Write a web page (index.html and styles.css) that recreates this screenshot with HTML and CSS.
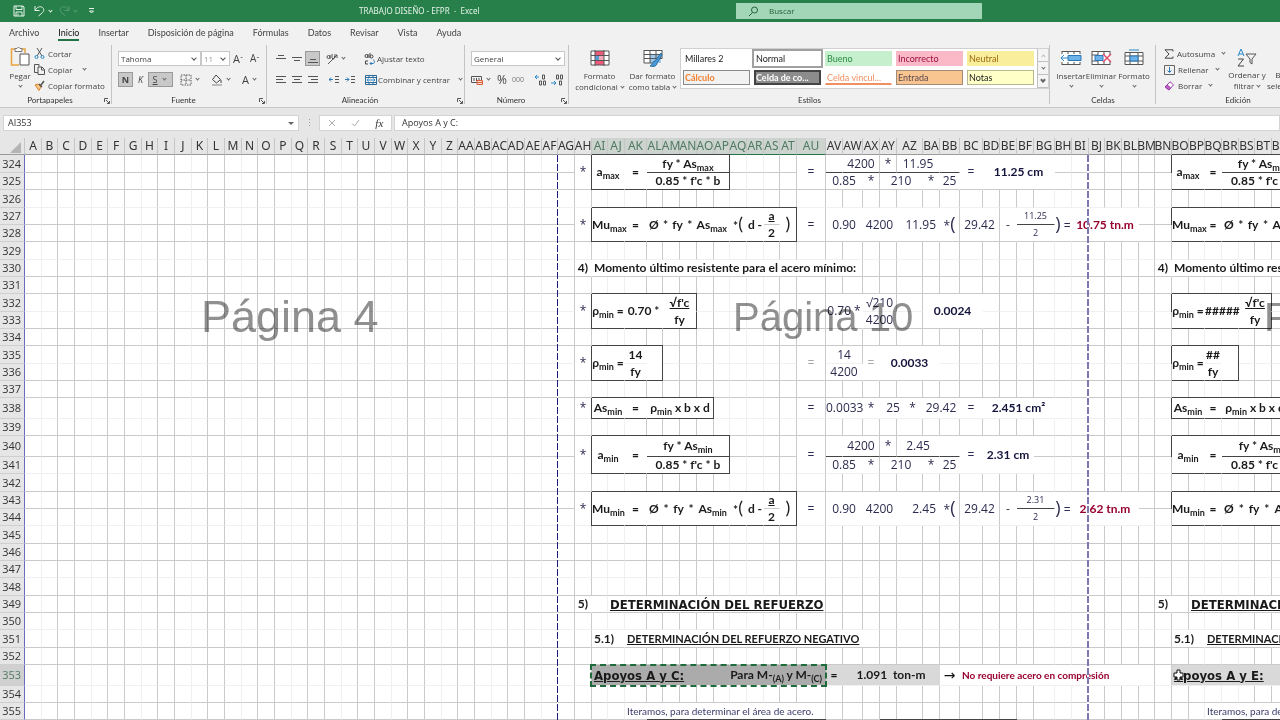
FILE: index.html
```html
<!DOCTYPE html>
<html lang="es">
<head>
<meta charset="utf-8">
<title>TRABAJO DISEÑO - EFPR - Excel</title>
<link rel="stylesheet" href="styles.css">
</head>
<body>
<div class="app">
  <header class="titlebar">
    <div class="quick">
      <button aria-label="Guardar"><svg width="12" height="12" viewBox="0 0 12 12"><path d="M1 1h9l1 1v9H1zM3 1v3.500h6V1M3 11V7h6v4M5 8.500v2"/></svg></button>
      <button aria-label="Deshacer"><svg width="11" height="12" viewBox="0 0 11 12"><path d="M1 1v4.500h4.500M1 5.500C3 2 6 .8 8.500 2.500c2 1.500 1.500 4-.5 5.500L4.500 11"/></svg></button>
      <span class="caret"></span>
      <button class="dim" aria-label="Rehacer"><svg width="11" height="12" viewBox="0 0 11 12"><path d="M10 1v4.500H5.500M10 5.500C8 2 5 .8 2.500 2.500c-2 1.500-1.500 4 .5 5.500L6.500 11"/></svg></button>
      <span class="caret dim"></span>
      <button class="more" aria-label="Personalizar"><svg width="7" height="6" viewBox="0 0 7 6"><path d="M1 .5h5M1.500 3l2 2 2-2z"/></svg></button>
    </div>
    <div class="doc-title">TRABAJO DISEÑO - EFPR&nbsp; -&nbsp; Excel</div>
    <label class="search"><svg width="11" height="11" viewBox="0 0 11 11"><circle cx="6.500" cy="4" r="3"/><path d="M4.500 6.500L1 10"/></svg><input type="text" placeholder="Buscar" aria-label="Buscar"></label>
  </header>

  <nav class="tabs">
    <a href="#">Archivo</a><a href="#" class="active">Inicio</a><a href="#">Insertar</a><a href="#">Disposición de página</a><a href="#">Fórmulas</a><a href="#">Datos</a><a href="#">Revisar</a><a href="#">Vista</a><a href="#">Ayuda</a>
  </nav>

  <div class="ribbon">
    <section class="group g-clip">
      <div class="body">
        <button class="big paste"><svg width="20" height="21" viewBox="0 0 20 21"><path d="M5 3H1.500v16H9M12 3h3v4" stroke="#e8a33d" stroke-width="1.500"/><path d="M5 2.500h2L8.500 1 10 2.500h2v3H5z" fill="#fff" stroke="#777"/><path d="M10 8h9v11h-9z" fill="#fff" stroke="#555"/></svg>Pegar<span class="caret"></span></button>
        <div class="stack">
          <button><svg width="11" height="11" viewBox="0 0 11 11"><path d="M3 0l5 8M8 0L3 8" stroke="#555"/><circle cx="2.500" cy="9" r="1.500" stroke="#2b88c8"/><circle cx="8.500" cy="9" r="1.500" stroke="#2b88c8"/></svg>Cortar</button>
          <button><svg width="11" height="11" viewBox="0 0 11 11"><path d="M4 8.500H.5v-8H5v2M4 3h4l2.500 2.500v5H4zM7.500 3v3h3" stroke="#555"/></svg>Copiar<span class="caret far"></span></button>
          <button><svg width="11" height="11" viewBox="0 0 11 11"><path d="M1 5l3-1 3 3-2 3.500z" fill="#f4c88a" stroke="#d9822b"/><path d="M5 4l3 3M7 5l3-4" stroke="#555" stroke-width="1.500"/></svg>Copiar formato</button>
        </div>
      </div>
      <footer>Portapapeles</footer><svg class="launch" width="6" height="6" viewBox="0 0 6 6"><path d="M.5 4V.5H4M2 2l3 3M5.500 3v2.500H3"/></svg>
    </section>

    <section class="group g-font">
      <div class="body rows">
        <div class="row">
          <span class="drop w-font"><select aria-label="Fuente"><option>Tahoma</option></select></span>
          <span class="drop w-size"><select aria-label="Tamaño"><option>11</option></select></span>
          <button class="glyph">A<sup>ˆ</sup></button><button class="glyph small">A<sup>ˇ</sup></button>
        </div>
        <div class="row">
          <button class="tog on"><b>N</b></button><button class="tog"><i>K</i></button><button class="tog on wide"><u>S</u><span class="caret"></span></button>
          <button class="gap"><svg width="12" height="12" viewBox="0 0 12 12"><path d="M1 1h10v10H1zM6 1v10M1 6h10" stroke="#555" stroke-dasharray="1.500 1"/></svg><span class="caret"></span></button>
          <button class="gap"><svg width="12" height="12" viewBox="0 0 12 12"><path d="M5 1l4.500 4.500L5.500 9 1.500 5.500zM10 6v3" stroke="#444"/><path d="M1 11h10" stroke="#bbb" stroke-width="2"/></svg><span class="caret"></span></button>
          <button class="glyph">A<span class="caret"></span></button>
        </div>
      </div>
      <footer>Fuente</footer><svg class="launch" width="6" height="6" viewBox="0 0 6 6"><path d="M.5 4V.5H4M2 2l3 3M5.500 3v2.500H3"/></svg>
    </section>

    <section class="group g-align">
      <div class="body rows">
        <div class="row">
          <button class="sq"><svg width="10" height="10" viewBox="0 0 10 10"><path d="M2 1.500h6M0 4.500h10"/></svg></button>
          <button class="sq"><svg width="10" height="10" viewBox="0 0 10 10"><path d="M0 3.500h10M2 6.500h6"/></svg></button>
          <button class="sq on"><svg width="10" height="10" viewBox="0 0 10 10"><path d="M2 5.500h6M0 8.500h10"/></svg></button>
          <button class="orient"><svg width="12" height="12" viewBox="0 0 12 12"><path d="M2 11L11 2M11 5V2H8M1 4a1.500 1.500 0 103 0 1.500 1.500 0 10-3 0M4 2v4M6 1v4a1.500 1.500 0 102-2"/></svg><span class="caret"></span></button>
          <button class="wrap"><svg width="12" height="12" viewBox="0 0 12 12"><path d="M1 3a1.500 1.500 0 103 0 1.500 1.500 0 10-3 0M4 1v4M6 0v5M6 3.500a1.500 1.500 0 103 0 1.500 1.500 0 10-3 0M4 8H1.500v3H4" stroke="#444"/><path d="M6 10.500h3c2 0 2-3.500 0-3.500M7.500 9L6 10.500 7.500 12" stroke="#2b78b8"/></svg>Ajustar texto</button>
        </div>
        <div class="row">
          <button class="sq"><svg width="10" height="8" viewBox="0 0 10 8"><path d="M0 .5h10M0 3.500h7M0 6.500h10"/></svg></button>
          <button class="sq"><svg width="10" height="8" viewBox="0 0 10 8"><path d="M0 .5h10M2 3.500h6M0 6.500h10"/></svg></button>
          <button class="sq"><svg width="10" height="8" viewBox="0 0 10 8"><path d="M0 .5h10M3 3.500h7M0 6.500h10"/></svg></button>
          <button class="sq ind"><svg width="10" height="8" viewBox="0 0 10 8"><path d="M6 .5h4M6 3.500h4M6 6.500h4"/><path d="M4 3.500H0M2 1.500l-2 2 2 2" stroke="#2b78b8"/></svg></button>
          <button class="sq"><svg width="10" height="8" viewBox="0 0 10 8"><path d="M6 .5h4M6 3.500h4M6 6.500h4"/><path d="M0 3.500h4M2 1.500l2 2-2 2" stroke="#2b78b8"/></svg></button>
          <button class="wrap"><svg width="12" height="10" viewBox="0 0 12 10"><path d="M.5.500h11v9H.5zM.5 2.500h11M.5 7.500h11M4 .5v2M8 .5v2M4 7.500v2M8 7.500v2" stroke="#2b6a98"/><path d="M2 5h8M3.500 3.500L2 5l1.500 1.500M8.500 3.500L10 5 8.500 6.500" stroke="#2b88c8"/></svg>Combinar y centrar<span class="caret far"></span></button>
        </div>
      </div>
      <footer>Alineación</footer><svg class="launch" width="6" height="6" viewBox="0 0 6 6"><path d="M.5 4V.5H4M2 2l3 3M5.500 3v2.500H3"/></svg>
    </section>

    <section class="group g-num">
      <div class="body rows">
        <div class="row"><span class="drop w-num"><select aria-label="Formato de número"><option>General</option></select></span></div>
        <div class="row num">
          <button><svg width="12" height="10" viewBox="0 0 12 10"><path d="M.5 1.500h10v6H.5zM3 3v3M8 3v2M5.500 3v3" stroke="#555"/><path d="M6 5.500h5.500v4H6zM6 7.500h5.500" stroke="#d9603b" fill="#fbe0d6"/></svg><span class="caret"></span></button>
          <button class="pct">%</button><button class="zeros">000</button>
          <button class="dec" aria-label="Aumentar decimales"><svg width="12" height="12" viewBox="0 0 12 12"><path d="M5 3H1M3 1L1 3l2 2" stroke="#2b88c8"/><path d="M8.500 1h2v4h-2zM5.500 7h2v4h-2zM9.500 7h2v4h-2z"/></svg></button><button class="dec" aria-label="Disminuir decimales"><svg width="12" height="12" viewBox="0 0 12 12"><path d="M0 9h5M3 7l2 2-2 2" stroke="#2b88c8"/><path d="M5.500 1h2v4h-2zM9.500 1h2v4h-2zM8.500 7h2v4h-2z"/></svg></button>
        </div>
      </div>
      <footer>Número</footer><svg class="launch" width="6" height="6" viewBox="0 0 6 6"><path d="M.5 4V.5H4M2 2l3 3M5.500 3v2.500H3"/></svg>
    </section>

    <section class="group g-style">
      <div class="body">
        <button class="big"><svg width="20" height="18" viewBox="0 0 20 18"><path d="M1 2h18v14H1z" fill="#fff" stroke="none"/><path d="M5 2h9v4H5zM8 12h6v4H5v-4z" fill="#ef5a7a" stroke="none"/><path d="M5 6h4v6H5z" fill="#5b9bd5" stroke="none"/><path d="M9 6h5v6H9z" fill="#f7a8b8" stroke="none"/><path d="M1 2h18M1 6.500h18M1 11.500h18M1 16h18M5 1v16M14 1v16M1 2v14M19 2v14" stroke="#555"/></svg>Formato<span>condicional <span class="caret"></span></span></button>
        <button class="big"><svg width="20" height="18" viewBox="0 0 20 18"><path d="M1 1h18v13H1z" fill="#fff" stroke="none"/><path d="M7 5h11v9H7z" fill="#9cc8ec" stroke="none"/><path d="M1 1.500h18M1 5.500h18M1 9.500h18M1 14h8M1 1v13M7 1v13M13 1v8M19 1v9" stroke="#555"/><path d="M18 4l-6 8c-3 0-2 4-5 5 4 1 7 0 7-3l5-8z" fill="#4a9bdc" stroke="#2b6a98"/></svg>Dar formato<span>como tabla <span class="caret"></span></span></button>
        <div class="gallery">
          <div class="styles">
            <button>Millares 2</button><button class="s-normal">Normal</button><button class="s-good">Bueno</button><button class="s-bad">Incorrecto</button><button class="s-neutral">Neutral</button>
            <button class="s-calc">Cálculo</button><button class="s-check">Celda de co...</button><button class="s-link">Celda vincul...</button><button class="s-input">Entrada</button><button class="s-note">Notas</button>
          </div>
          <div class="scroller"><button aria-label="Subir" class="up"><span class="caret"></span></button><button aria-label="Bajar"><span class="caret"></span></button><button aria-label="Más" class="all"><span class="caret"></span></button></div>
        </div>
      </div>
      <footer>Estilos</footer>
    </section>

    <section class="group g-cells">
      <div class="body">
        <button class="big"><svg width="22" height="18" viewBox="0 0 22 18"><path d="M2 2h18v14H2z" fill="#fff" stroke="none"/><path d="M2 2.500h18M2 15.500h18M8 2v3M14 2v3M8 13v3M14 13v3M2 2v3M20 2v3M2 13v3M20 13v3" stroke="#555"/><path d="M8 6.500h13v5H8z" fill="#6db3ea" stroke="#2b78b8"/><path d="M8 9H1M4 6L1 9l3 3" stroke="#2b88c8"/></svg>Insertar<span class="caret"></span></button>
        <button class="big"><svg width="22" height="18" viewBox="0 0 22 18"><path d="M2 2h18v14H2z" fill="#fff" stroke="none"/><path d="M2 2.500h18M2 15.500h18M2 2v14M8 2v4M14 2v4M8 12v4M14 12v4M2 6h6M2 12h6M20 2v4M20 12v4" stroke="#555"/><path d="M5 6.500h8v5H5z" fill="#6db3ea" stroke="#2b78b8"/><path d="M13 5l8 8M21 5l-8 8" stroke="#e0506a" stroke-width="1.500"/></svg>Eliminar<span class="caret"></span></button>
        <button class="big"><svg width="22" height="18" viewBox="0 0 22 18"><path d="M2 4h18v12H2z" fill="#fff" stroke="none"/><path d="M2 3.500h18v12H2zM7 3v13M15 3v13M2 7h18M2 12h18" stroke="#555"/><path d="M7 7h8v5H7z" fill="#6db3ea" stroke="#2b78b8"/><path d="M6 1h10" stroke="#2b88c8"/></svg>Formato<span class="caret"></span></button>
      </div>
      <footer>Celdas</footer>
    </section>

    <section class="group g-edit">
      <div class="body">
        <div class="stack">
          <button><svg width="10" height="10" viewBox="0 0 10 10"><path d="M9 2.500V.8H1L5 5 1 9.200h8V7.500" stroke="#444"/></svg>Autosuma<span class="caret"></span></button>
          <button><svg width="11" height="10" viewBox="0 0 11 10"><path d="M.5.500h10v9H.5z" stroke="#666"/><path d="M5.500 2v5M3.500 5.500l2 2 2-2" stroke="#2b78b8"/></svg>Rellenar<span class="caret"></span></button>
          <button><svg width="11" height="10" viewBox="0 0 11 10"><path d="M6 .8l3.500 3L5 9 1.200 6z" fill="#fff" stroke="#9a3fa8"/><path d="M1.200 6L3 3.800 6.800 7 5 9z" fill="#c060cc" stroke="#9a3fa8"/></svg>Borrar<span class="caret"></span></button>
        </div>
        <button class="big sort"><svg width="20" height="20" viewBox="0 0 20 20"><path d="M1 8l3-7 3 7M2 6h4" stroke="#2b88c8"/><path d="M1 11h5.500L1 18h6" stroke="#444"/><path d="M9 6h10l-4 5v5l-2-1.500V11z" stroke="#555"/></svg>Ordenar y<span>filtrar <span class="caret"></span></span></button>
        <button class="big find"><svg width="20" height="20" viewBox="0 0 20 20"><circle cx="12" cy="8" r="6" stroke="#555"/><path d="M8 13l-6 6" stroke="#555"/></svg>Buscar y<span>seleccionar <span class="caret"></span></span></button>
      </div>
      <footer>Edición</footer>
    </section>
  </div>

  <div class="formula-bar">
    <label class="namebox"><input type="text" value="AI353" aria-label="Cuadro de nombres"><span class="tri"></span></label>
    <span class="dots">⋮</span>
    <div class="fx"><button aria-label="Cancelar"><svg width="8" height="8" viewBox="0 0 8 8"><path d="M1 1l6 6M7 1L1 7" stroke="#aaa"/></svg></button><button aria-label="Introducir"><svg width="9" height="8" viewBox="0 0 9 8"><path d="M1 4.500L3.500 7 8 1" stroke="#aaa"/></svg></button><button class="fn"><i>fx</i></button></div>
    <input class="formula" type="text" value="Apoyos A y C:" aria-label="Barra de fórmulas">
  </div>

  <main class="sheet">
    <table id="grid"></table>
    <div class="mark big-mark">Página 4</div>
    <div class="mark mid-mark">Página 10</div>
    <div class="mark end-mark">Página 16</div>
    <div class="break first"></div>
    <div class="break second"></div>
    <div class="marquee"></div>
    <svg class="cursor" width="11" height="12" viewBox="0 0 11 12"><path d="M4 1h3v3h3v4H7v3H4V8H1V4h3z" fill="#fff" stroke="#111"/></svg>
  </main>
</div>
<script src="sheet.js"></script>
</body>
</html>
```
FILE: styles.css
```css
* { box-sizing: border-box; }
body { margin: 0; font: 9px/12px "Open Sans", "Noto Sans", sans-serif; color: #444; background: #e6e6e6; }
.app { height: 100vh; display: flex; flex-direction: column; overflow: hidden; }
button { border: 0; background: none; padding: 0; margin: 0; font: inherit; color: inherit; display: flex; align-items: center; white-space: nowrap; }
svg { fill: none; stroke: #555; flex: none; }
input, select { font: inherit; color: inherit; border: 0; background: none; padding: 0; margin: 0; min-width: 0; outline: 0; appearance: none; }
a { color: inherit; text-decoration: none; }
.caret { display: inline-block; flex: none; width: 3px; height: 3px; border-right: 1px solid #666; border-bottom: 1px solid #666; transform: rotate(45deg); margin: 0 2px 2px 4px; }
.caret.far { margin-left: 8px; }

.titlebar { flex: none; height: 22px; background: #27804a; color: #e6f3ea; display: grid; grid-template-columns: 359px 377px 246px 1fr; align-items: center; }
.quick { display: flex; align-items: center; padding-left: 13px; }
.quick svg { stroke: #e6f3ea; }
.quick button + .caret { border-color: #e6f3ea; margin-right: 7px; }
.quick button:first-child { margin-right: 9px; }
.quick .dim { opacity: .25; }
.quick .more { margin-left: 4px; }
.doc-title { font-family: "Noto Sans", sans-serif; font-size: 8px; white-space: nowrap; }
.search { height: 16px; background: #a3d6b6; display: flex; align-items: center; gap: 10px; padding-left: 12px; color: #24613c; font-size: 8px; }
.search svg { stroke: #24613c; }
.search input::placeholder { color: #24613c; opacity: 1; }

.tabs { flex: none; height: 21px; background: #f1f1f1; display: flex; gap: 19px; padding: 4px 9px 0; font: 9px/14px Lato, sans-serif; color: #444; }
.tabs a { height: 15px; white-space: nowrap; }
.tabs .active { color: #111; border-bottom: 2px solid #217346; }

.ribbon { flex: none; height: 65px; background: #f1f1f1; display: flex; border-bottom: 1px solid #c8c8c8; font: 8px/11px "Open Sans", sans-serif; overflow: hidden; }
.group { position: relative; flex: none; display: flex; flex-direction: column; justify-content: space-between; padding: 3px 0 0; }
.group::after { content: ""; position: absolute; right: 0; top: 2px; bottom: 3px; width: 1px; background: #c4c4c4; }
.group footer { text-align: center; height: 13px; font: 8px/13px Lato, sans-serif; color: #333; }
.group footer:not(:last-child) { padding-right: 12px; }
.launch { position: absolute; right: 2px; bottom: 3px; }
.g-clip { width: 112px; } .g-font { width: 155px; } .g-align { width: 198px; } .g-num { width: 104px; }
.g-style { width: 481px; } .g-cells { width: 106px; } .g-edit { width: 164px; }
.body { display: flex; padding-left: 6px; }
.big { flex-direction: column; text-align: center; }
.big svg { margin-bottom: 3px; }
.big > .caret { margin: 3px 0 0; }
.big span .caret { margin: 0 0 2px 1px; }
.paste { width: 28px; }
.stack { display: flex; flex-direction: column; gap: 5px; padding-top: 2px; }
.stack button { height: 11px; gap: 3px; }
.rows { flex-direction: column; gap: 6px; padding-top: 5px; }
.row { display: flex; align-items: center; height: 15px; }
.drop { position: relative; background: #fff; border: 1px solid #c8c8c8; height: 15px; display: flex; }
.drop select { width: 100%; padding-left: 2px; }
.drop::after { content: ""; position: absolute; right: 4px; top: 4px; width: 3px; height: 3px; border-right: 1px solid #555; border-bottom: 1px solid #555; transform: rotate(45deg); }
.w-font { width: 83px; } .w-size { width: 29px; color: #999; } .w-num { width: 94px; }
.glyph { margin-left: 3px; font-size: 11px; width: 14px; }
.glyph.small { font-size: 10px; }
.glyph sup { font-size: 8px; line-height: 0; }
.tog { width: 15px; height: 15px; justify-content: center; font-size: 9px; }
.tog.on, .sq.on { background: #c8c8c8; outline: 1px solid #9a9a9a; outline-offset: -1px; }
.tog.wide { width: 25px; margin-right: 7px; }
.tog.wide .caret { margin-left: 6px; }
.gap { margin-right: 10px; }
.row .gap + .glyph { margin-left: 0; }
.sq { width: 15px; height: 15px; justify-content: center; margin-right: 1px; }
.ind { margin-left: 5px; }
.orient { margin-left: 5px; width: 38px; }
.g-align .wrap { gap: 1px; }
.row .sq + .wrap { margin-left: 7px; }
.num { gap: 5px; }
.pct { font-size: 12px; } .zeros { font-size: 7px; color: #777; margin-right: 5px; }
.g-style .body { gap: 2px; padding-left: 5px; }
.g-style .big { width: 51px; padding-top: 3px; }
.gallery { display: flex; margin: 2px 0 0; background: #fff; border: 1px solid #d0d0d0; height: 41px; }
.styles { display: grid; grid-template-columns: repeat(5, 67px); grid-template-rows: 15px 15px; column-gap: 4px; row-gap: 4px; padding: 2px 0 2px 2px; }
.styles button { padding: 0 1px; color: #222; border: 1px solid transparent; font: 9px/11px Lato, sans-serif; }
.styles .s-normal { outline: 2px solid #a0a0a0; }
.styles .s-good { background: #c6efce; color: #2d8a45; }
.styles .s-bad { background: #fbb9c8; color: #9c1040; }
.styles .s-neutral { background: #f8ee9c; color: #9c6a10; }
.styles .s-calc { background: #f2f2f2; border-color: #8a8a8a; color: #f08030; font-weight: bold; }
.styles .s-check { background: #8c8c8c; border: 2px solid #444; color: #fff; font-weight: bold; padding: 0; }
.styles .s-link { color: #f09060; border-bottom: 2px solid #f09060; }
.styles .s-input { background: #f8c490; border-color: #a08a78; color: #5c4a50; }
.styles .s-note { background: #ffffc8; border-color: #b8b890; }
.scroller { width: 11px; margin-left: 3px; display: grid; grid-template-rows: 1fr 1fr 1fr; background: #f4f4f4; }
.scroller button { justify-content: center; border-left: 1px solid #c0c0c0; border-bottom: 1px solid #c0c0c0; }
.scroller .caret { margin: 0 0 2px; }
.scroller .up .caret { transform: rotate(225deg); margin: 2px 0 0; border-color: #bbb; }
.scroller .all .caret { border-width: 2px; width: 4px; height: 4px; }
.g-cells .body { padding: 3px 0 0 6px; }
.g-cells .big { width: 30px; }
.g-cells .big:last-child { width: 36px; }
.g-edit .body { padding-left: 8px; }
.g-edit .stack { width: 61px; }
.g-edit .big { width: 44px; padding-top: 2px; }
.g-edit .big svg { margin-bottom: 1px; }
.g-edit::after { display: none; }

.formula-bar { flex: none; height: 30px; padding: 7px 0; display: flex; background: #e6e6e6; color: #333; line-height: 16px; }
.namebox { width: 296px; margin-left: 3px; background: #fff; border: 1px solid #d4d4d4; display: flex; align-items: center; padding: 0 4px; }
.namebox input { flex: 1; }
.tri { border: 3px solid transparent; border-top-color: #666; border-bottom: 0; }
.dots { width: 20px; text-align: center; color: #999; }
.fx { width: 73px; background: #fff; border: 1px solid #d4d4d4; display: flex; justify-content: space-around; }
.fn { font-family: "Liberation Serif", serif; font-size: 11px; }
.formula { flex: 1; background: #fff; border: 1px solid #d4d4d4; padding-left: 7px; margin-left: 2px; }

.sheet { position: relative; flex: 1; overflow: hidden; background: #fff; }
table { border-collapse: separate; border-spacing: 0; table-layout: fixed; font: 12px/14px "Open Sans", "Noto Sans", sans-serif; color: #2c2c50; }
th { font-weight: normal; padding: 0; white-space: nowrap; color: #333; background: #e6e6e6; }
thead th { height: 17px; line-height: 16px; border-right: 1px solid #c6c6c6; border-bottom: 1px solid #9a9a9a; font-family: "Noto Sans", sans-serif; font-size: 12px; }
thead span { display: block; margin: 0 -4px; text-align: center; position: relative; }
thead th.sel { background: #cdd3cf; color: #4f7a62; border-bottom: 1px solid #217346; }
.corner svg { display: block; margin: 2px 3px 0 auto; fill: #b4b4b4; stroke: none; }
tbody th { font-size: 11px; text-align: right; padding-right: 3px; border-bottom: 1px solid #cfcfcf; border-right: 1px solid #6a6ac0; }
tbody th.sel { background: #d0d0d0; color: #4f7a62; }
td { --t: 0 0; --l: 0 0; padding: 0; white-space: nowrap; text-align: center; border-right: 1px solid #cacaca; border-bottom: 1px solid #cacaca; box-shadow: var(--t), var(--l); background: #fff; }
td.fr { border-right-color: #f0f0f0; }
td.fb { border-bottom-color: #f0f0f0; }
td.b, td.u, td.red { font-family: Lato, sans-serif; font-weight: bold; color: #1a1a1a; }
td.navy { color: #14143c; }
td.red { color: #98002e; }
td.t { --t: 0 -1px #444; }
td.l { --l: -1px 0 #444; }
td.r { border-right-color: #444; }
td.d { border-bottom-color: #444; }
td.n { border-right-color: #fff; }
td.m { border-bottom-color: #fff; }
td.left { text-align: left; padding-left: 2px; }
td.right { text-align: right; padding-right: 3px; }
td.sm { font-size: 9px; }
td.pale { color: #aaa; }
td.h { font: bold 13px/15px "DejaVu Sans Condensed", "DejaVu Sans", sans-serif; text-decoration: underline; color: #1a1a1a; }
td.u { text-decoration: underline; font-size: 11px; }
td.g { background: #d9d9d9; border-right-color: #d9d9d9; }
td.s { background: #ababab; border-right-color: #ababab; }
td.note { font: 10px/12px Lato, sans-serif; color: #3c3c6c; }
td.notice { font-size: 10px; }
td.arrow { font: 14px/14px "DejaVu Sans", sans-serif; color: #111; }
td sub { font-size: 9px; line-height: 0; vertical-align: -3px; }
td .par { font-size: 18px; line-height: 14px; font-weight: normal; }
.spread { display: flex; justify-content: space-between; padding: 0 2px; }

.mark { position: absolute; font-family: "Liberation Sans", sans-serif; color: #909090; mix-blend-mode: multiply; white-space: nowrap; pointer-events: none; }
.big-mark { left: 201px; top: 153px; font-size: 45px; line-height: 52px; }
.mid-mark { left: 733px; top: 156px; font-size: 40px; line-height: 46px; }
.end-mark { left: 1264px; top: 156px; font-size: 40px; line-height: 46px; }
.break { position: absolute; top: 17px; bottom: 0; width: 1px; }
.first { left: 557px; background: repeating-linear-gradient(#1a1a80 0 7px, #fff 7px 9px); }
.second { left: 1087px; width: 2px; background: repeating-linear-gradient(#7c78b4 0 7px, #fff 7px 9px); }
.marquee { position: absolute; left: 590px; top: 526px; width: 237px; height: 23px; border: 2px dashed #1e6b3c; }
.cursor { position: absolute; left: 1173px; top: 531px; }
```
FILE: sheet.js
```js
// Column edges in pixels, starting at the right of the row headings.
const edges = [];
for (let i = 0; i <= 32; i++) edges.push(Math.floor(24.5 + i * 16.67) + 1);
edges.push(575, 592, 608, 625, 647, 663, 680, 697, 714, 730, 747, 764, 780, 797, 826, 843, 863, 880, 897, 923, 940, 960,
  983, 1000, 1017, 1034, 1055, 1072, 1089, 1105, 1122, 1139, 1155, 1172, 1189, 1205, 1222, 1239, 1255, 1272, 1289, 1306);
const rowEdges = [154, 172, 189, 207, 224, 241, 259, 276, 293, 311, 328, 345, 363, 380, 397, 418, 435, 456, 473, 491, 508,
  525, 543, 560, 577, 595, 612, 629, 647, 664, 685, 702, 719, 736];
const FIRST = 324;

const name = i => i < 26 ? String.fromCharCode(65 + i) : name(Math.floor(i / 26) - 1) + name(i % 26);
const index = s => [...s].reduce((n, c) => n * 26 + c.charCodeAt(0) - 64, 0) - 1;

const cells = [];
// range "AI:AJ", first row, rows spanned, classes, markup
const put = (range, row, span, cls, html) => {
  const [a, z = a] = range.split(':');
  cells.push({ a: index(a), z: index(z), row, span, cls, html });
};
const sub = (t, s) => `${t}<sub>${s}</sub>`;

// Left-hand formula boxes; each key gives the column range of one part.
function formulas(c, copy) {
  const star = row => { if (!copy) put(c.mark, row, row === 338 ? 1 : 2, '', '*'); };
  for (const [row, s] of [[324, 'max'], [340, 'min']]) {
    star(row);
    put(c.name, row, 2, 'b t l d n', sub('a', s));
    put(c.eq, row, 2, 'b t d n', '=');
    put(c.frac, row, 1, 'b t d r', 'fy * ' + sub('As', s));
    put(c.frac, row + 1, 1, 'b d r', "0.85 * f'c * b");
  }
  for (const [row, s] of [[327, 'max'], [343, 'min']]) {
    star(row);
    put(c.name, row, 2, 'b t l d n', sub('Mu', s));
    put(c.eq, row, 2, 'b t d n', '=');
    put(c.frac, row, 2, 'b t d n', `<div class="spread"><span>Ø</span><span>*</span><span>fy</span><span>*</span><span>${sub('As', s)}</span></div>`);
    if (copy) continue;
    put('AQ', row, 2, 'b t d n', '*<span class="par">(</span>');
    put('AR', row, 2, 'b t d n', 'd -');
    put('AS', row, 1, 'b t n', '<u>a</u>');
    put('AS', row + 1, 1, 'b d n', '2');
    put('AT', row, 2, 'b t d r', '<span class="par">)</span>');
  }
  put(c.mark, 330, 1, 'b right n', '4)');
  put(c.long, 330, 1, 'b left', 'Momento último resistente para el acero mínimo:');
  star(332);
  put(c.name, 332, 2, 'b t l d n', sub('ρ', 'min') + ' =');
  put(c.coef, 332, 2, 'b t d n', copy ? '#####' : '0.70 *');
  put(c.root, 332, 1, 'b t r m', "<u>√f'c</u>");
  put(c.root, 333, 1, 'b d r', 'fy');
  star(335);
  put(c.name, 335, 2, 'b t l d n', sub('ρ', 'min') + ' =');
  put(c.eq, 335, 1, 'b t n', copy ? '##' : '14');
  put(c.eq, 336, 1, 'b d n', 'fy');
  put(c.pad, 335, 2, 't d r', '');
  star(338);
  put(c.name, 338, 1, 'b t l d n', sub('As', 'min'));
  put(c.eq, 338, 1, 'b t d n', '=');
  put(c.area, 338, 1, 'b t d r', sub('ρ', 'min') + ' x b x d');
  put(c.mark, 349, 1, 'b right n', '5)');
  put(c.title, 349, 1, 'h left', 'DETERMINACIÓN DEL REFUERZO');
  put(c.name, 351, 1, 'b left n', '5.1)');
  put(c.subtitle, 351, 1, 'u left', 'DETERMINACIÓN DEL REFUERZO NEGATIVO');
  put(c.note, 355, 1, 'note left', 'Iteramos, para determinar el área de acero.');
  put(c.rule, 356, 1, 't', '');
}
formulas({ mark: 'AH', name: 'AI:AJ', eq: 'AK', frac: 'AL:AP', long: 'AI:AW', coef: 'AK:AL', root: 'AM:AN', pad: 'AL',
  area: 'AL:AO', title: 'AJ:AU', subtitle: 'AK:AX', note: 'AK:AU', rule: 'AL:AU' }, false);
formulas({ mark: 'BN', name: 'BO:BP', eq: 'BQ', frac: 'BR:BV', long: 'BO:BV', coef: 'BQ:BR', root: 'BS:BT', pad: 'BR',
  area: 'BR:BU', title: 'BP:BV', subtitle: 'BQ:BV', note: 'BQ:BV', rule: 'BR:BV' }, true);

// Worked values
for (const [row, top, result, range] of [[324, '11.95', '11.25 cm', 'BD:BG'], [340, '2.45', '2.31 cm', 'BD:BF']]) {
  put('AU', row, 2, '', '=');
  put('AV', row, 1, 'd n', ''); put('AW:AX', row, 1, 'd', '4200'); put('AY', row, 1, 'd', '*');
  put('AZ:BA', row, 1, 'd n', top); put('BB', row, 1, 'd n', '');
  put('AV:AW', row + 1, 1, 'n', '0.85'); put('AX', row + 1, 1, '', '*'); put('AY:AZ', row + 1, 1, 'n', '210');
  put('BA', row + 1, 1, 'n', '*'); put('BB', row + 1, 1, 'n', '25');
  put('BC', row, 2, 'n', '='); put(range, row, 2, 'b navy n', result);
}
for (const [row, d, a, m] of [[327, '11.95', '11.25', '10.75'], [343, '2.45', '2.31', '2.62']]) {
  put('AU', row, 2, '', '=');
  put('AV:AW', row, 2, 'n', '0.90'); put('AX:AY', row, 2, 'n', '4200'); put('AZ:BA', row, 2, 'right n', d);
  put('BB', row, 2, '', '*<span class="par">(</span>'); put('BC:BD', row, 2, '', '29.42'); put('BE', row, 2, 'n', '-');
  put('BF:BG', row, 1, 'sm d n', a); put('BF:BG', row + 1, 1, 'sm n', '2');
  put('BH', row, 2, 'n', '<span class="par">)</span> ='); put('BI:BL', row, 2, 'red n', m + ' tn.m');
}
put('AV:AW', 332, 2, 'n', '0.70 *'); put('AX:AY', 332, 1, '', '√210'); put('AX:AY', 333, 1, 'n', '4200');
put('BA:BC', 332, 2, 'b navy n', '0.0024');
put('AU', 335, 2, 'pale', '='); put('AV:AW', 335, 1, '', '14'); put('AV:AW', 336, 1, 'n', '4200');
put('AX', 335, 2, 'pale n', '='); put('AY:BA', 335, 2, 'b navy n', '0.0033');
put('AU', 338, 1, '', '='); put('AV:AW', 338, 1, 'n', '0.0033'); put('AX', 338, 1, 'n', '*');
put('AY:AZ', 338, 1, 'n', '25 &nbsp; *'); put('BA:BB', 338, 1, 'n', '29.42'); put('BC', 338, 1, 'n', '=');
put('BD:BG', 338, 1, 'b navy n', '2.451 cm²');

// Row 353
put('AI:AO', 353, 1, 'h s left', 'Apoyos A y C:');
put('AP:AU', 353, 1, 'b s right', `Para ${sub('M-', '(A)')} y ${sub('M-', '(C)')}`);
put('AV', 353, 1, 'b g', '='); put('AW:BA', 353, 1, 'b g', '1.091 &nbsp;ton-m'); put('BB', 353, 1, 'arrow n', '→');
put('BC:BL', 353, 1, 'red notice n left', 'No requiere acero en compresión');
put('BO:BV', 353, 1, 'h g left', 'Apoyos A y E:');
put('AY:BE', 356, 1, 't', '');

const cols = edges.length - 1;
const rows = rowEdges.length - 1;
const taken = Array.from({ length: rows }, () => new Array(cols).fill(false));
const starts = new Map(cells.map(c => [`${c.row}:${c.a}`, c]));
const faintCol = z => z < 32 ? z % 3 === 0 : (edges[z + 1] + z) % 3 === 0;

let out = `<colgroup><col style="width:${edges[0]}px">`;
for (let c = 0; c < cols; c++) out += `<col style="width:${edges[c + 1] - edges[c]}px">`;
out += '</colgroup><thead><tr><th class="corner"><svg width="11" height="11" viewBox="0 0 11 11"><path d="M11 0v11H0z"/></svg></th>';
for (let c = 0; c < cols; c++) out += `<th scope="col"${c >= index('AI') && c <= index('AU') ? ' class="sel"' : ''}><span>${name(c)}</span></th>`;
out += '</tr></thead><tbody>';
for (let r = 0; r < rows; r++) {
  const row = FIRST + r;
  out += `<tr style="height:${rowEdges[r + 1] - rowEdges[r]}px"><th scope="row"${row === 353 ? ' class="sel"' : ''}>${row}</th>`;
  for (let c = 0; c < cols; c++) {
    if (taken[r][c]) continue;
    const cell = starts.get(`${row}:${c}`) || { a: c, z: c, span: 1, cls: '', html: '' };
    for (let y = r; y < r + cell.span && y < rows; y++) for (let x = cell.a; x <= cell.z; x++) taken[y][x] = true;
    const faint = (faintCol(cell.z) ? 'fr ' : '') + ((r + cell.span) % 3 === 0 ? 'fb ' : '');
    out += `<td class="${faint}${cell.cls}" colspan="${cell.z - cell.a + 1}" rowspan="${cell.span}">${cell.html}</td>`;
  }
  out += '</tr>';
}
const grid = document.getElementById('grid');
grid.style.width = edges[cols] + 'px';
grid.innerHTML = out + '</tbody>';
```
